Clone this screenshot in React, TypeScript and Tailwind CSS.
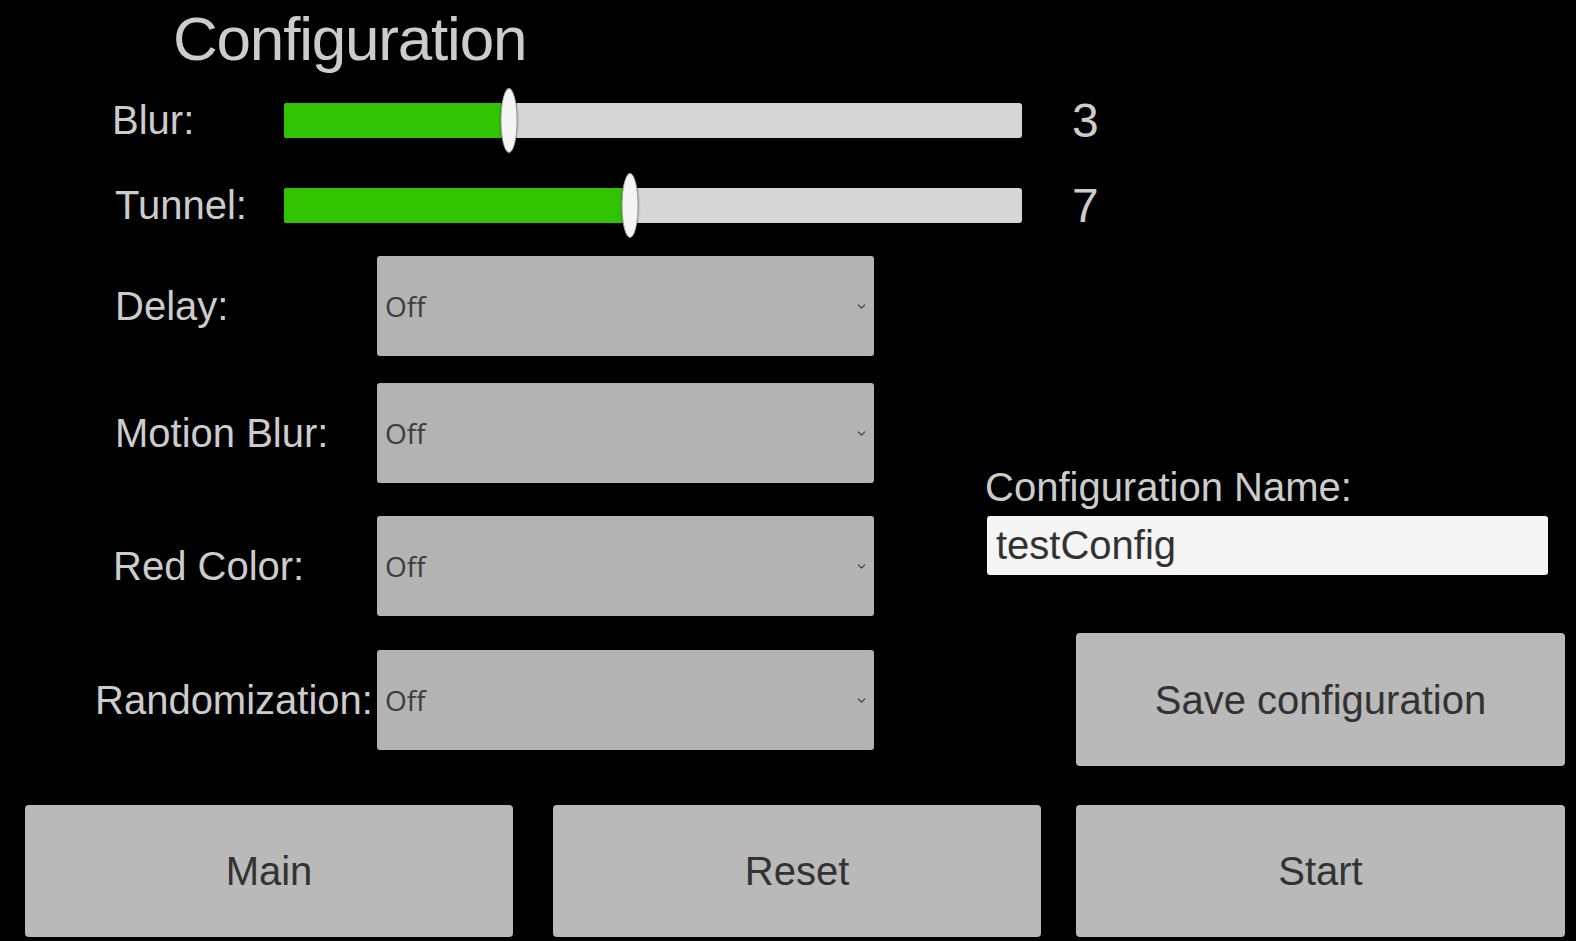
import { ChevronDown } from "lucide-react";

// Slider geometry taken from the track width (px)
const TRACK_WIDTH = 738;

type SliderRowProps = {
  label: string;
  value: number;
  thumbAt: number;
  labelPad: string;
};

const SliderRow = ({ label, value, thumbAt, labelPad }: SliderRowProps) => (
  <div className="flex h-[65px] items-center">
    <div className={`w-[284px] shrink-0 text-[40px] leading-[45px] text-[#cccccc] ${labelPad}`}>{label}</div>
    <div className="relative h-[35px] w-[738px] shrink-0 rounded-[3px] bg-[#d6d6d6]">
      <div
        className="absolute left-0 top-0 h-full rounded-l-[3px] bg-[#31c300]"
        style={{ width: `${(thumbAt / TRACK_WIDTH) * 100}%` }}
      />
      <div
        className="absolute top-[-15px] h-[65px] w-[17px] -translate-x-1/2 rounded-[50%] border border-[#a0a0a0] bg-[#f4f4f4] shadow-[0_0_2px_rgba(0,0,0,0.5)]"
        style={{ left: `${thumbAt}px` }}
      />
    </div>
    <div className="ml-[50px] text-[48px] leading-[55px] text-[#cccccc]">{value}</div>
  </div>
);

type DropdownRowProps = {
  label: string;
  labelPad: string;
  spacing: string;
};

const DropdownRow = ({ label, labelPad, spacing }: DropdownRowProps) => (
  <div className={`flex h-[100px] items-center ${spacing}`}>
    <div className={`w-[377px] shrink-0 whitespace-nowrap text-[40px] leading-[45px] text-[#cccccc] ${labelPad}`}>{label}</div>
    <div className="flex h-[100px] w-[497px] shrink-0 items-center justify-between rounded-[3px] bg-[#b3b3b3] pl-[8px] pr-[6px]">
      <span className="font-['Open_Sans','Noto_Sans',sans-serif] text-[28px] leading-[34px] text-[#3c3c3c]">Off</span>
      <ChevronDown className="h-[13px] w-[13px] text-[#3c3c3c]" strokeWidth={2.2} />
    </div>
  </div>
);

export default function App() {
  return (
    <div className="flex h-[941px] w-[1576px] flex-col overflow-hidden bg-black font-['Liberation_Sans',Arial,sans-serif]">
      {/* Title */}
      <h1 className="h-[88px] shrink-0 pl-[173px] text-[62px] leading-[77px] tracking-[-1.2px] text-[#cccccc]">
        Configuration
      </h1>

      {/* Sliders */}
      <div className="flex flex-col gap-[20px]">
        <SliderRow label="Blur:" value={3} thumbAt={225} labelPad="pl-[112px]" />
        <SliderRow label="Tunnel:" value={7} thumbAt={346} labelPad="pl-[115px]" />
      </div>

      {/* Dropdowns + name panel */}
      <div className="flex h-[528px] shrink-0">
        <div className="flex w-[874px] shrink-0 flex-col">
          <DropdownRow label="Delay:" labelPad="pl-[115px]" spacing="mt-[18px]" />
          <DropdownRow label="Motion Blur:" labelPad="pl-[115px]" spacing="mt-[27px]" />
          <DropdownRow label="Red Color:" labelPad="pl-[113px]" spacing="mt-[33px]" />
          <DropdownRow label="Randomization:" labelPad="pl-[95px]" spacing="mt-[34px]" />
        </div>

        <div className="ml-[113px] flex flex-1 flex-col">
          <div className="-ml-[2px] mt-[226px] text-[40px] leading-[46px] text-[#cccccc]">Configuration Name:</div>
          <div className="mt-[6px] flex h-[59px] w-[561px] items-center rounded-[3px] bg-[#f5f5f5] pb-[2px] pl-[9px] text-[40px] leading-[46px] text-[#323232]">
            testConfig
          </div>
          <button className="ml-[89px] mt-[58px] h-[133px] w-[489px] rounded-[4px] bg-[#b9b9b9] text-[40px] text-[#323232]">
            Save configuration
          </button>
        </div>
      </div>

      {/* Bottom buttons */}
      <div className="mt-[39px] flex pl-[25px]">
        <button className="h-[132px] w-[488px] rounded-[4px] bg-[#b9b9b9] text-[40px] text-[#323232]">Main</button>
        <button className="ml-[40px] h-[132px] w-[488px] rounded-[4px] bg-[#b9b9b9] text-[40px] text-[#323232]">Reset</button>
        <button className="ml-[35px] h-[132px] w-[489px] rounded-[4px] bg-[#b9b9b9] text-[40px] text-[#323232]">Start</button>
      </div>
    </div>
  );
}
